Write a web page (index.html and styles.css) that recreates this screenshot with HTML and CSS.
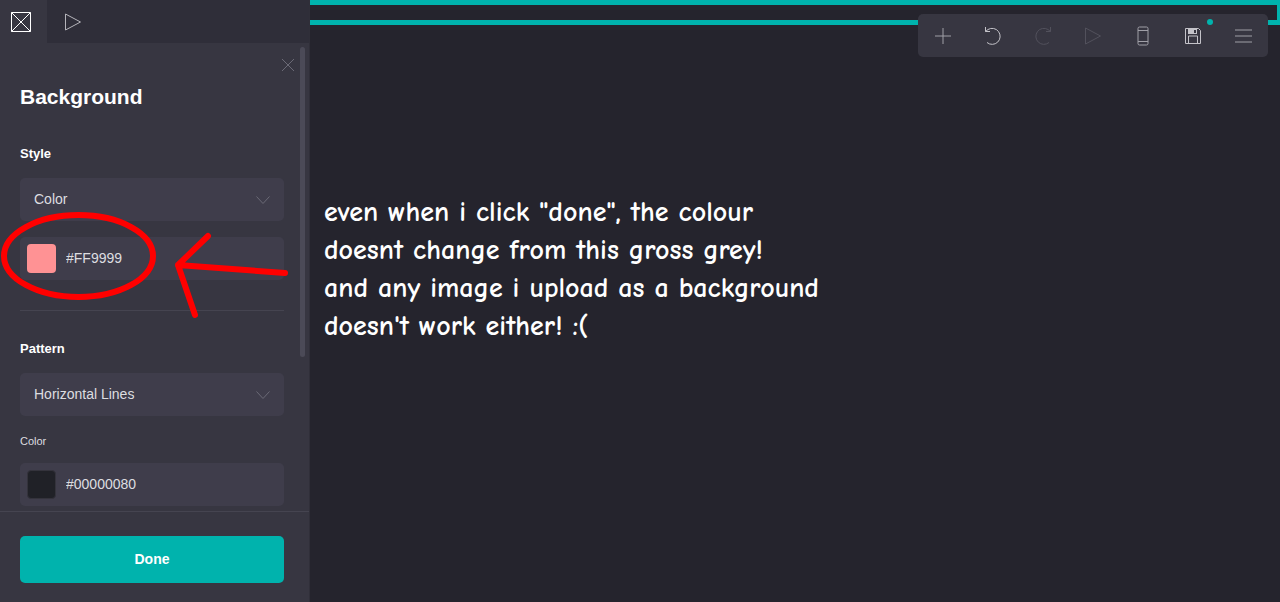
FILE: index.html
```
<!DOCTYPE html>
<html lang="en">
<head>
    <meta charset="UTF-8">
    <meta name="viewport" content="width=device-width, initial-scale=1.0">
    <title>Background</title>
    <link rel="stylesheet" href="styles.css">
</head>
<body>

<div class="editor">
    <!-- Settings panel -->
    <aside class="sidebar">
        <nav class="tabs">
            <button class="tab active" aria-label="Appearance">
                <svg width="22" height="22" viewBox="0 0 22 22"><path d="M1.5 1.5h19v19h-19zM1.5 1.5l19 19M20.5 1.5l-19 19"/></svg>
            </button>
            <button class="tab" aria-label="Animation">
                <svg width="18" height="18" viewBox="0 0 18 18"><path d="M1.5 1v16l15-8z"/></svg>
            </button>
        </nav>

        <div class="panel-wrap">
            <form class="panel" id="background-form">
                <h2>Background</h2>

                <label class="group-label" for="style">Style</label>
                <div class="field">
                    <select id="style">
                        <option>Color</option>
                        <option>Image</option>
                    </select>
                    <svg class="chevron" width="14" height="8" viewBox="0 0 14 8"><path d="M0.5 0.5l6.5 7 6.5-7"/></svg>
                </div>
                <div class="field color-field">
                    <button type="button" class="swatch pink" aria-label="Pick color"></button>
                    <input type="text" value="#FF9999" aria-label="Background color">
                </div>

                <hr>

                <label class="group-label" for="pattern">Pattern</label>
                <div class="field">
                    <select id="pattern">
                        <option>Horizontal Lines</option>
                        <option>None</option>
                    </select>
                    <svg class="chevron" width="14" height="8" viewBox="0 0 14 8"><path d="M0.5 0.5l6.5 7 6.5-7"/></svg>
                </div>
                <label class="small-label" for="pattern-color">Color</label>
                <div class="field color-field">
                    <button type="button" class="swatch dark" aria-label="Pick pattern color"></button>
                    <input type="text" id="pattern-color" value="#00000080">
                </div>
            </form>
            <button class="close" aria-label="Close">
                <svg width="14" height="14" viewBox="0 0 14 14"><path d="M1 1l12 12M13 1L1 13"/></svg>
            </button>
            <div class="scroll-thumb"></div>
        </div>

        <div class="footer">
            <button class="done" type="submit" form="background-form">Done</button>
        </div>
    </aside>

    <!-- Page canvas -->
    <main class="canvas">
        <div class="selection"></div>
        <p class="note">even when i click "done", the colour<br>doesnt change from this gross grey!<br>and any image i upload as a background<br>doesn't work either! :(</p>

        <div class="toolbar">
            <button aria-label="Add">
                <svg width="20" height="20" viewBox="0 0 20 20"><path d="M10 2v16M2 10h16"/></svg>
            </button>
            <button class="bright" aria-label="Undo">
                <svg width="20" height="20" viewBox="0 0 20 20"><path d="M2.5 1v4.5H7M2.5 5.500L5 3.500A8 8 0 1 1 4 16.500"/></svg>
            </button>
            <button class="faded" aria-label="Redo">
                <svg width="20" height="20" viewBox="0 0 20 20"><path d="M17.5 1v4.5H13M17.5 5.500L15 3.500A8 8 0 1 0 16 16.500"/></svg>
            </button>
            <button class="faded" aria-label="Play">
                <svg width="20" height="20" viewBox="0 0 20 20"><path d="M2.5 2v16l15-8z"/></svg>
            </button>
            <button aria-label="Mobile view">
                <svg width="20" height="20" viewBox="0 0 20 20"><rect x="5" y="1" width="10" height="18" rx="1.5"/><path d="M5 4.500h10M5 15.500h10"/></svg>
            </button>
            <button class="bright" aria-label="Save">
                <svg width="20" height="20" viewBox="0 0 20 20"><path d="M2.5 2.500h13l2 2v13h-15zM5.500 17v-7h9v7"/><path class="solid" d="M5 3h9v5h-9zM11 4v3h2v-3z"/></svg>
                <span class="dot"></span>
            </button>
            <button aria-label="Menu">
                <svg width="20" height="20" viewBox="0 0 20 20"><path d="M2 4h17M2 10h17M2 16h17"/></svg>
            </button>
        </div>
    </main>

    <!-- Hand drawn circle and arrow -->
    <svg class="markup" width="310" height="340" viewBox="0 0 310 340">
        <ellipse cx="78.5" cy="256" rx="74.5" ry="41"/>
        <path d="M285 273L178 265M208 236L178 265L195 315"/>
    </svg>
</div>

</body>
</html>
```
FILE: styles.css
```
* {
    box-sizing: border-box;
}
body {
    margin: 0;
    font-family: "Liberation Sans", Arial, sans-serif;
    background-color: #25242d;
    color: #fff;
}
button {
    padding: 0;
    border: none;
    background: none;
    cursor: pointer;
}
svg {
    display: block;
    fill: none;
    stroke: currentColor;
}
.editor {
    position: relative;
    display: flex;
    height: 100vh;
    overflow: hidden;
}

/* Sidebar */
.sidebar {
    display: flex;
    flex-direction: column;
    flex: 0 0 310px;
    background-color: #373641;
    border-right: 1px solid #302f39;
}
.tabs {
    display: flex;
    height: 43px;
    background-color: #2f2e39;
}
.tab {
    display: flex;
    align-items: center;
    justify-content: center;
    width: 52px;
    color: #b5b4ba;
}
.tab.active {
    width: 47px;
    padding-right: 6px;
    background-color: #373641;
    color: #fff;
}
.panel-wrap {
    position: relative;
    flex: 1;
    min-height: 0;
}
.panel {
    height: 100%;
    padding: 41px 25px 0 20px;
    overflow-y: auto;
    scrollbar-width: none;
}
h2 {
    margin: 0 0 36px;
    font-size: 21px;
    line-height: 26px;
}
.group-label {
    display: block;
    margin-bottom: 16px;
    font-size: 13px;
    font-weight: bold;
    line-height: 16px;
}
.small-label {
    display: block;
    margin: 17px 0 14px;
    font-size: 11px;
    line-height: 16px;
    color: #dddde0;
}
.field {
    position: relative;
    display: flex;
    align-items: center;
    height: 43px;
    margin-bottom: 16px;
    border-radius: 5px;
    background-color: #3f3d4b;
}
.field select,
.field input {
    flex: 1;
    min-width: 0;
    height: 100%;
    border: none;
    outline: none;
    background: none;
    color: #dddde0;
    font-family: inherit;
    font-size: 14px;
}
.field select {
    appearance: none;
    padding: 0 14px 2px;
}
.field input {
    padding: 0 10px 2px;
}
.color-field {
    padding-left: 7px;
}
.chevron {
    position: absolute;
    right: 14px;
    color: #6b6a76;
    pointer-events: none;
}
.swatch {
    width: 29px;
    height: 29px;
    border-radius: 4px;
}
.swatch.pink {
    background-color: #ff9294;
}
.swatch.dark {
    background-color: #202127;
    border: 1px solid #34333c;
}
hr {
    height: 1px;
    margin: 30px 0;
    border: none;
    background-color: #454450;
}
.close {
    position: absolute;
    top: 15px;
    right: 14px;
    color: #6b6a76;
}
.scroll-thumb {
    position: absolute;
    top: 4px;
    right: 4px;
    width: 5px;
    height: 310px;
    border-radius: 3px;
    background-color: #4b4a57;
}
.footer {
    padding: 24px 25px 19px 20px;
    border-top: 1px solid #454450;
}
.done {
    display: block;
    width: 100%;
    height: 47px;
    padding-bottom: 2px;
    border-radius: 5px;
    background-color: #00b3ad;
    color: #fff;
    font-family: inherit;
    font-size: 14px;
    font-weight: bold;
}

/* Canvas */
.canvas {
    position: relative;
    flex: 1;
    min-width: 0;
}
.selection {
    height: 25px;
    border: 5px solid #00b3ad;
    border-width: 5px 3px 5px 0;
}
.note {
    margin: 168px 14px 0;
    font-family: "Comic Sans MS", "Comic Neue", "Open Sans", sans-serif;
    font-size: 28px;
    font-weight: bold;
    line-height: 38px;
}
.toolbar {
    position: absolute;
    top: 14px;
    right: 12px;
    display: flex;
    height: 43px;
    border-radius: 5px;
    background-color: #373641;
}
.toolbar button {
    position: relative;
    display: flex;
    align-items: center;
    justify-content: center;
    width: 50px;
    color: #a09fa7;
}
.toolbar .bright {
    color: #c4c3c9;
}
.toolbar .faded {
    color: #52515c;
}
.toolbar .solid {
    fill: currentColor;
    fill-rule: evenodd;
    stroke: none;
}
.dot {
    position: absolute;
    top: 5px;
    right: 5px;
    width: 6px;
    height: 6px;
    border-radius: 50%;
    background-color: #00b3ad;
}
.markup {
    position: absolute;
    top: 0;
    left: 0;
    color: #f00;
    stroke-width: 6px;
    stroke-linecap: round;
    stroke-linejoin: round;
    pointer-events: none;
}
```
